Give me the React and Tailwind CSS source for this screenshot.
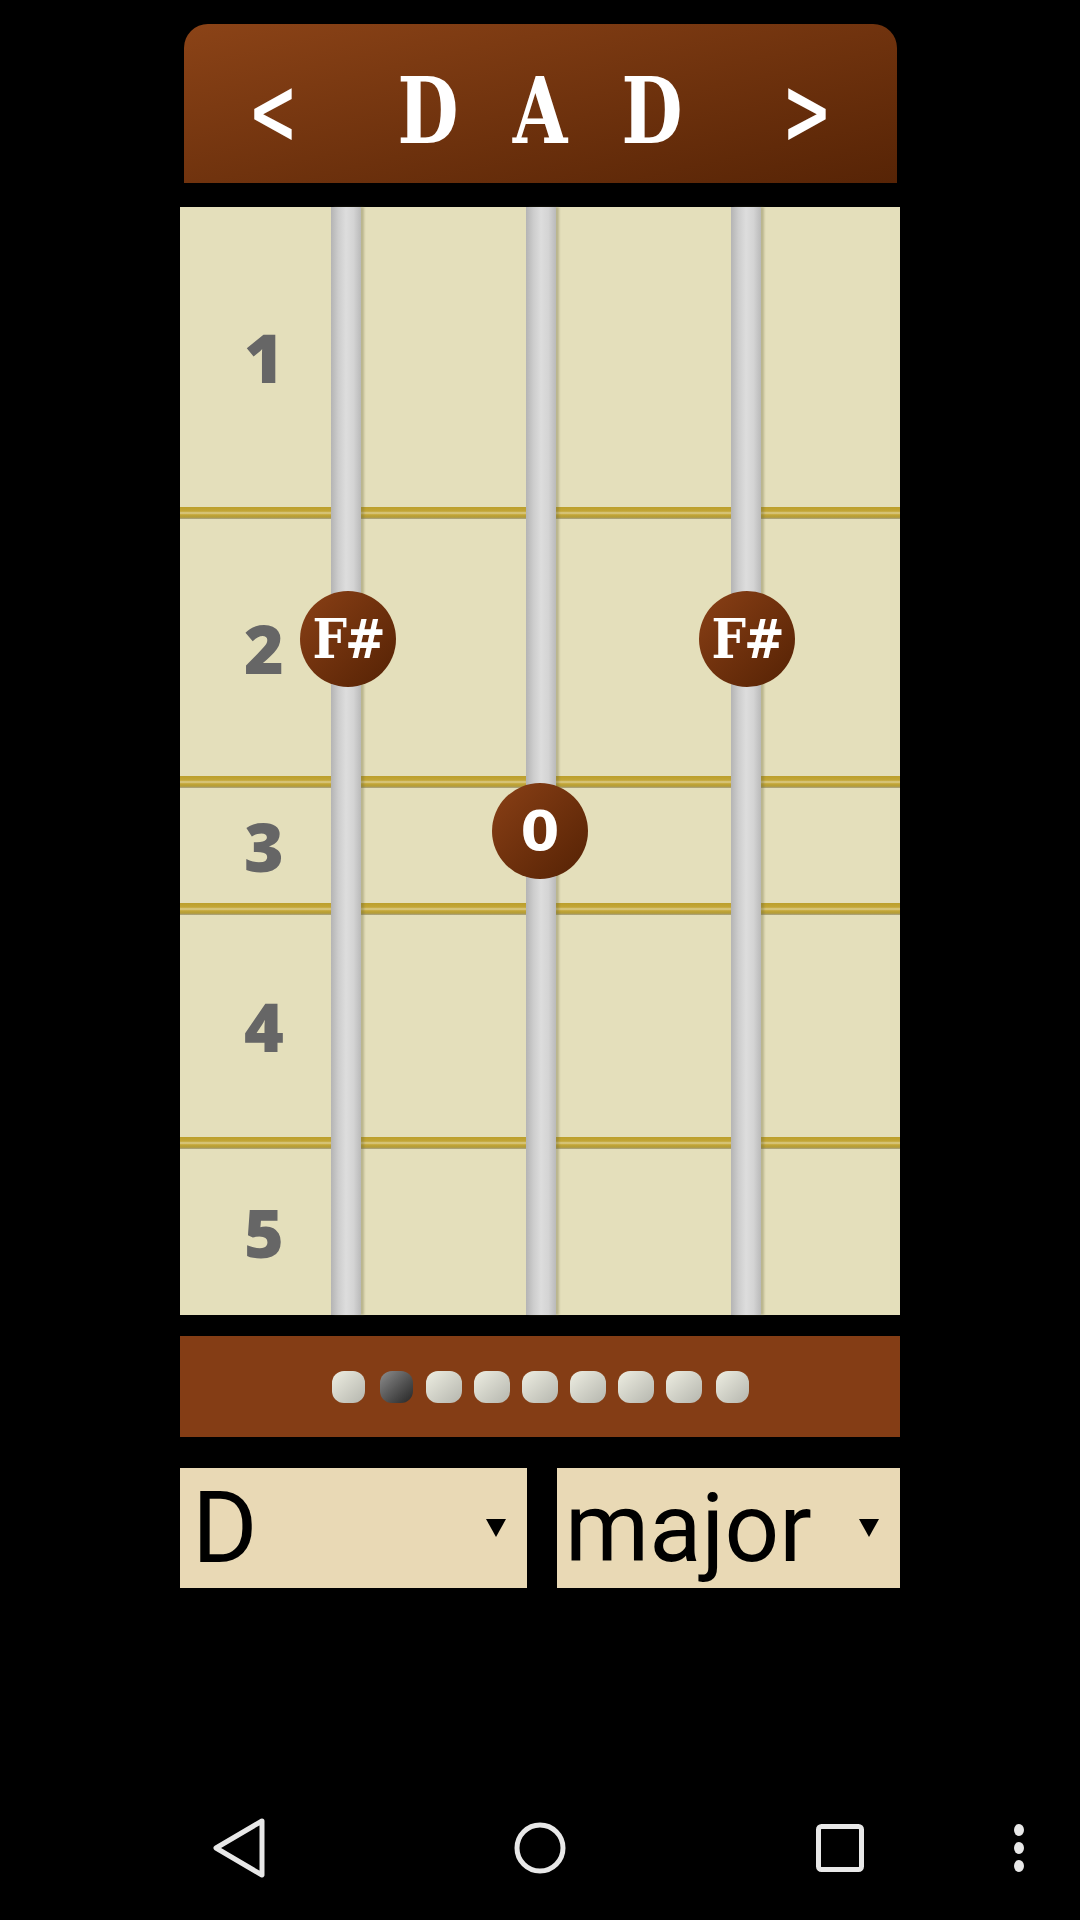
import React from 'react';

const frets = [
  { num: '1', h: 'h-[300px]' },
  { num: '2', h: 'h-[257px]' },
  { num: '3', h: 'h-[115px]' },
  { num: '4', h: 'h-[222px]' },
  { num: '5', h: 'h-[166px]' },
];

const strings = ['left-[151px]', 'left-[346px]', 'left-[551px]'];

const notes = [
  { label: 'F#', pos: 'left-[120px] top-[384px]', serif: true },
  { label: 'F#', pos: 'left-[519px] top-[384px]', serif: true },
  { label: '0', pos: 'left-[312px] top-[576px]', serif: false },
];

// 9 pills, second one is the active one
const pills = [33, 33, 36, 36, 36, 36, 36, 36, 33];

const Fret = () => (
  <div className="h-[12px] w-full bg-[linear-gradient(to_bottom,#bb9f2c_0%,#c3a636_35%,#dccd8d_50%,#c3a636_65%,#b39c38_85%,#a9a48c_100%)]" />
);

const Pill = ({ w, active }) => (
  <div className="w-[48px] flex justify-center">
    <div
      className={
        active
          ? 'h-[32px] rounded-[12px] bg-linear-to-br from-[#8e8e8e] to-[#272727]'
          : 'h-[32px] rounded-[12px] bg-linear-to-br from-[#eeeee2] to-[#b5b6ae]'
      }
      style={{ width: w }}
    />
  </div>
);

const Arrow = () => (
  <svg width="20" height="18" viewBox="0 0 20 18">
    <polygon points="0,0 20,0 10,18" fill="#000" />
  </svg>
);

export default function App() {
  return (
    <div className="w-[1080px] h-[1920px] bg-black flex flex-col">
      <div className="flex-1 flex flex-col items-center">
        {/* tuning header */}
        <div className="mt-[24px] w-[713px] h-[159px] rounded-t-[24px] bg-linear-to-br from-[#8b4317] to-[#572406] flex items-center justify-center pt-[14px] text-white font-bold text-[92px] leading-none font-['DejaVu_Serif',serif] font-stretch-condensed">
          <div className="w-[110px] text-center scale-x-[0.72]">&lt;</div>
          <div className="ml-[44px] w-[112px] text-center scale-x-[0.85]">D</div>
          <div className="w-[112px] text-center scale-x-[0.85]">A</div>
          <div className="w-[112px] text-center scale-x-[0.85]">D</div>
          <div className="ml-[44px] w-[110px] text-center scale-x-[0.72]">&gt;</div>
        </div>

        {/* fretboard */}
        <div className="relative mt-[24px] w-[720px] bg-[#e4dfbb] flex flex-col">
          {frets.map((f, i) => (
            <React.Fragment key={f.num}>
              {i > 0 && <Fret />}
              <div className={`${f.h} flex items-center`}>
                <div className="ml-[54px] w-[60px] text-center text-[68px] leading-none font-extrabold text-[#666666] font-['Open_Sans',sans-serif]">
                  {f.num}
                </div>
              </div>
            </React.Fragment>
          ))}

          {strings.map((s) => (
            <div
              key={s}
              className={`absolute top-0 bottom-0 ${s} w-[30px] bg-[linear-gradient(to_right,#b4b4b4_0%,#cdcdcd_25%,#dddddd_50%,#d4d4d4_75%,#bababa_100%)] shadow-[3px_0_2px_rgba(110,105,60,0.35)]`}
            />
          ))}

          {notes.map((n, i) => (
            <div
              key={i}
              className={`absolute ${n.pos} w-[96px] h-[96px] rounded-full bg-linear-to-br from-[#8a4016] to-[#552205] flex items-center justify-center text-white font-bold leading-none ${
                n.serif
                  ? "text-[54px] font-['DejaVu_Serif',serif] font-stretch-condensed tracking-[-2px]"
                  : "text-[56px] font-['DejaVu_Sans',sans-serif]"
              }`}
            >
              {n.label}
            </div>
          ))}
        </div>

        {/* capo / position bar */}
        <div className="mt-[21px] w-[720px] h-[101px] bg-[#843d15] flex items-center justify-center">
          {pills.map((w, i) => (
            <Pill key={i} w={w} active={i === 1} />
          ))}
        </div>

        {/* key + chord type selects */}
        <div className="mt-[31px] w-[720px] flex gap-[30px] font-['Roboto',sans-serif] text-black">
          <div className="flex-1 h-[120px] bg-[#e9d9b5] flex items-center justify-between pl-[12px] pr-[21px]">
            <span className="text-[100px] leading-none">D</span>
            <Arrow />
          </div>
          <div className="flex-1 h-[120px] bg-[#e9d9b5] flex items-center justify-between pl-[8px] pr-[21px]">
            <span className="text-[96px] leading-none">major</span>
            <Arrow />
          </div>
        </div>
      </div>

      {/* android nav bar */}
      <div className="h-[144px] relative flex items-center">
        <svg className="absolute left-[208px] top-[41px]" width="64" height="62" viewBox="0 0 64 62">
          <path d="M54 4 L8 31 L54 58 Z" fill="none" stroke="#e8e8e8" strokeWidth="5" strokeLinejoin="round" />
        </svg>
        <svg className="absolute left-[512px] top-[44px]" width="56" height="56" viewBox="0 0 56 56">
          <circle cx="28" cy="28" r="23" fill="none" stroke="#e8e8e8" strokeWidth="5" />
        </svg>
        <svg className="absolute left-[814px] top-[46px]" width="52" height="52" viewBox="0 0 52 52">
          <rect x="4.5" y="4.5" width="43" height="43" rx="3" fill="none" stroke="#e8e8e8" strokeWidth="5" />
        </svg>
        <svg className="absolute left-[1012px] top-[46px]" width="14" height="52" viewBox="0 0 14 52">
          <ellipse cx="7" cy="8" rx="5" ry="6" fill="#e8e8e8" />
          <ellipse cx="7" cy="26" rx="5" ry="6" fill="#e8e8e8" />
          <ellipse cx="7" cy="44" rx="5" ry="6" fill="#e8e8e8" />
        </svg>
      </div>
    </div>
  );
}
